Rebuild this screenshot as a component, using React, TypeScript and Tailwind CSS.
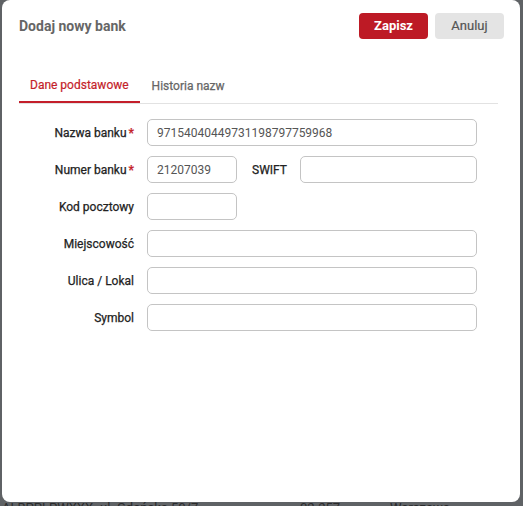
import React from 'react';

const font = { fontFamily: 'Roboto, "Liberation Sans", sans-serif' };

const Field = ({ label, required, children }: { label: string; required?: boolean; children: React.ReactNode }) => (
  <div className="flex items-center h-[27px]">
    <div className="w-[132px] text-right text-[12px] text-[#222]">
      <span style={{ WebkitTextStroke: '0.25px #222' }}>{label}</span>
      {required && (
        <span className="text-[#c41e2a] ml-[2px] font-bold" style={{ WebkitTextStroke: '0.2px #c41e2a' }}>
          *
        </span>
      )}
    </div>
    <div className="ml-[13px] flex items-center">{children}</div>
  </div>
);

const Input = ({ value, w }: { value?: string; w: string }) => (
  <input
    readOnly
    value={value ?? ''}
    className={`${w} h-[27px] rounded-[5px] border border-[#c4c4c4] bg-white px-[9px] text-[12px] text-[#555] outline-none`}
    style={font}
  />
);

export default function App() {
  return (
    <div className="relative w-[523px] h-[506px] overflow-hidden bg-[#5f6265]" style={font}>
      {/* page behind the overlay */}
      <div className="pt-[501px] flex text-[13px] text-[#2a2b2c] leading-none whitespace-nowrap">
        <span className="ml-[2px] w-[98px]">ALBPPLPWXXX</span>
        <span className="w-[200px]">ul. Gdańska 50/7</span>
        <span className="w-[90px]">02-257</span>
        <span>Warszawa</span>
      </div>

      {/* dialog */}
      <div className="absolute left-[2px] top-0 w-[518px] h-[502px] rounded-[8px] bg-white">
        <div className="flex items-center justify-between pl-[17px] pr-[16px] pt-[13px]">
          <h2 className="text-[14px] font-bold text-[#666]">Dodaj nowy bank</h2>
          <div className="flex gap-[7px]">
            <button className="w-[69px] h-[26px] rounded-[4px] bg-[#bd1a25] text-white text-[13px] font-bold">Zapisz</button>
            <button className="w-[69px] h-[26px] rounded-[4px] bg-[#e4e4e4] text-[#555] text-[13px]" style={{ WebkitTextStroke: '0.2px #555' }}>Anuluj</button>
          </div>
        </div>

        <div className="mt-[30px] ml-[17px] mr-[22px] flex border-b border-[#e2e2e2]">
          <div className="h-[34px] px-[11px] flex items-center text-[12px] text-[#c41e2a] border-b-2 border-[#c41e2a] -mb-px" style={{ WebkitTextStroke: '0.2px #c41e2a' }}>
            Dane podstawowe
          </div>
          <div className="h-[34px] px-[12px] flex items-center text-[12px] text-[#666]" style={{ WebkitTextStroke: '0.25px #666' }}>Historia nazw</div>
        </div>

        <div className="mt-[15px] flex flex-col gap-[10px]">
          <Field label="Nazwa banku" required>
            <Input w="w-[330px]" value="97154040449731198797759968" />
          </Field>
          <Field label="Numer banku" required>
            <Input w="w-[90px]" value="21207039" />
            <span className="ml-[15px] w-[48px] text-[12px] text-[#222]" style={{ WebkitTextStroke: '0.25px #222' }}>SWIFT</span>
            <Input w="w-[177px]" />
          </Field>
          <Field label="Kod pocztowy">
            <Input w="w-[90px]" />
          </Field>
          <Field label="Miejscowość">
            <Input w="w-[330px]" />
          </Field>
          <Field label="Ulica / Lokal">
            <Input w="w-[330px]" />
          </Field>
          <Field label="Symbol">
            <Input w="w-[330px]" />
          </Field>
        </div>
      </div>
    </div>
  );
}
